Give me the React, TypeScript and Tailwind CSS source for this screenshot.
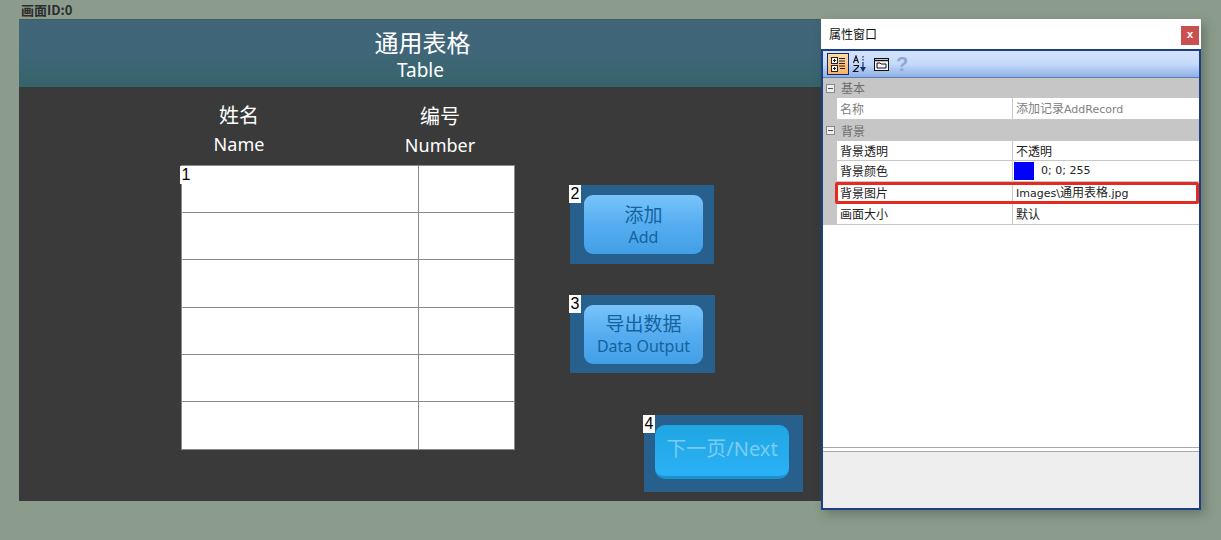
const sans = "font-['Noto_Sans','Noto_Sans_CJK_SC',sans-serif]";

function Tag({ n, className = "-left-px" }: { n: number; className?: string }) {
  return (
    <span className={`absolute top-0 flex h-[18px] w-[12px] items-center justify-center bg-white font-['Liberation_Sans',sans-serif] text-[16px] leading-none text-black ${className}`}>
      {n}
    </span>
  );
}

function BlueButton({ n, zh, en, className }: { n: number; zh: string; en: string; className: string }) {
  return (
    <div className={`relative flex items-center pl-[14px] bg-[#27608c] ${className}`}>
      <Tag n={n} />
      <div className="flex h-[59px] w-[119px] flex-col items-center justify-center rounded-[9px] bg-gradient-to-b from-[#78c4fa] via-[#55adf0] to-[#429fe6] text-[#14639f]">
        <span className="text-[19px] leading-[24px]">{zh}</span>
        <span className="text-[16px] leading-[20px]">{en}</span>
      </div>
    </div>
  );
}

function Section({ label, h = "h-[20px]" }: { label: string; h?: string }) {
  return (
    <div className={`flex ${h} items-center bg-[#c6c6c6] pl-[3px] text-[12px] text-[#6f6f6f]`}>
      <span className="mr-[6px] flex h-[9px] w-[9px] items-center justify-center border border-[#8a8a8a] bg-[#eeeeee]">
        <span className="h-px w-[5px] bg-[#555555]" />
      </span>
      {label}
    </div>
  );
}

function Row({ name, children, h, muted }: { name: string; children: React.ReactNode; h: string; muted?: boolean }) {
  return (
    <div className={`flex ${h} ${muted ? "text-[#808080]" : "text-[#222222]"} text-[12px]`}>
      <div className="w-[14px] bg-[#c6c6c6]" />
      <div className="flex w-[176px] items-center border-r border-b border-[#c8c8c8] bg-white pl-[3px]">{name}</div>
      <div className="flex flex-1 items-center border-b border-[#c8c8c8] bg-white pl-[3px]">{children}</div>
    </div>
  );
}

function Latin({ children }: { children: React.ReactNode }) {
  return <span className="font-['DejaVu_Sans',sans-serif] text-[11px]">{children}</span>;
}

function PropertyWindow() {
  return (
    <div className="absolute top-[19px] left-[821px] flex h-[491px] w-[380px] flex-col bg-white shadow-[4px_4px_10px_rgba(40,50,40,0.35)] font-['Noto_Sans_CJK_SC','Noto_Sans',sans-serif]">
      <div className="flex h-[32px] shrink-0 items-center justify-between border-b-2 border-[#1d3f86] pr-[2px] pl-[8px] text-[12px] text-[#111111]">
        属性窗口
        <span className="mt-[2px] flex h-[19px] w-[18px] items-center justify-center bg-[#c8504f] pb-[2px] font-['Liberation_Sans',sans-serif] text-[11px] font-bold text-white">
          x
        </span>
      </div>
      <div className="flex min-h-0 flex-1 flex-col border-x-2 border-b-2 border-[#1d3f86]">
        <div className="flex h-[27px] shrink-0 items-center gap-[5px] border-b border-[#5d7db5] bg-gradient-to-b from-[#d5e4fc] via-[#c5d9fa] to-[#8fb0e6] pl-[4px]">
          <span className="flex h-[22px] w-[22px] items-center justify-center border border-[#16266b] bg-gradient-to-b from-[#ffd9a8] to-[#f9b262]">
            <svg width="16" height="16" viewBox="0 0 16 16" fill="none" stroke="#222222" strokeWidth="1">
              <rect x="1.5" y="1.5" width="6" height="6" fill="#f4f4f4" />
              <rect x="1.5" y="9.5" width="6" height="6" fill="#f4f4f4" />
              <path d="M3 4.5h3M4.5 3v3M3 12.5h3M4.5 11v3M9 2.5h6M9 5h6M9 7.5h6M9 10h6M10 12.5h5" />
            </svg>
          </span>
          <svg width="15" height="18" viewBox="0 0 15 18" fill="none" className="-ml-[2px]">
            <path d="M1.5 8 4 1l2.5 7M2.5 5.5h3M1.5 10.5h5v1l-5 5h5" stroke="#111111" strokeWidth="1.1" />
            <path d="M11 1v1.5M11 4v1.5M11 7v5" stroke="#1a2f6b" strokeWidth="1.2" />
            <path d="m8 12 3 5 3-5z" fill="#1a2f6b" />
          </svg>
          <svg width="15" height="13" viewBox="0 0 15 13" fill="none" className="ml-[2px]">
            <rect x="0.5" y="0.5" width="14" height="12" fill="#f4f6fb" stroke="#111111" />
            <path d="M0.5 2.5h14" stroke="#111111" strokeWidth="1.4" />
            <path d="M3 10V5h3l1 1h5v4z" stroke="#111111" />
          </svg>
          <span className="ml-[2px] font-['Liberation_Sans',sans-serif] text-[20px] leading-none font-bold text-[#8fa8d2]">?</span>
        </div>
        <Section label="基本" />
        <Row name="名称" h="h-[22px]" muted>
          <span>添加记录<Latin>AddRecord</Latin></span>
        </Row>
        <Section label="背景" h="h-[21px]" />
        <Row name="背景透明" h="h-[20px]">
          不透明
        </Row>
        <Row name="背景颜色" h="h-[21px]">
          <span className="mr-[7px] -ml-[2px] h-[18px] w-[20px] bg-[#0000ff]" />
          <Latin>0; 0; 255</Latin>
        </Row>
        <div className="relative">
          <Row name="背景图片" h="h-[22px]">
            <span><Latin>Images\</Latin>通用表格<Latin>.jpg</Latin></span>
          </Row>
          <div className="absolute inset-y-0 right-0 left-[12px] rounded-[2px] border-[3px] border-[#e32b22]" />
        </div>
        <Row name="画面大小" h="h-[21px]">
          默认
        </Row>
        <div className="flex-1 border-b border-[#aaaaaa]" />
        <div className="h-[4px] shrink-0 border-b border-[#aaaaaa]" />
        <div className="h-[56px] shrink-0 bg-[#eeeeee]" />
      </div>
    </div>
  );
}

function DataTable() {
  const rows = [46, 47, 48, 47, 47, 48];
  return (
    <div className="relative w-[334px] border border-[#8a8a8a] bg-white">
      <Tag n={1} className="-left-[2px]" />
      {rows.map((h, i) => (
        <div key={i} className={`flex border-[#8a8a8a] ${i > 0 ? "border-t" : ""}`} style={{ height: h }}>
          <div className="w-[237px] border-r border-[#8a8a8a]" />
        </div>
      ))}
    </div>
  );
}

export default function App() {
  return (
    <div className={`relative h-[540px] w-[1221px] overflow-hidden bg-[#8b9c8c] ${sans}`}>
      <div className="flex h-[19px] items-center pl-[21px] font-['Noto_Sans_CJK_SC',sans-serif] text-[13px] font-bold text-[#2c2c2c]">
        画面ID:0
      </div>
      <div className="ml-[19px] flex h-[482px] w-[804px] flex-col border-t border-[#4a5a58]">
        <div className="flex h-[67px] shrink-0 flex-col items-center bg-gradient-to-b from-[#416579] via-[#3f6678] to-[#356469] pt-[7px] text-white">
          <span className="ml-[3px] text-[24px] leading-[32px]">通用表格</span>
          <span className="-ml-px text-[19px] leading-[22px]">Table</span>
        </div>
        <div className="flex flex-1 bg-[#3a3a3a]">
          <div className="ml-[162px] w-[334px]">
            <div className="flex h-[78px] pt-[15px] text-white">
              <div className="flex w-[116px] flex-col items-center">
                <span className="text-[20px] leading-[28px]">姓名</span>
                <span className="text-[18px] leading-[28px]">Name</span>
              </div>
              <div className="mt-px ml-[85px] flex w-[116px] flex-col items-center">
                <span className="text-[20px] leading-[28px]">编号</span>
                <span className="text-[18px] leading-[28px]">Number</span>
              </div>
            </div>
            <DataTable />
          </div>
          <div className="ml-[55px] flex flex-col pt-[98px]">
            <BlueButton n={2} zh="添加" en="Add" className="h-[79px] w-[144px]" />
            <BlueButton n={3} zh="导出数据" en="Data Output" className="mt-[31px] h-[78px] w-[145px]" />
            <div className="relative mt-[42px] ml-[74px] h-[77px] w-[159px] bg-[#27608c] pt-[10px] pl-[11px]">
              <Tag n={4} />
              <div className="flex h-[54px] w-[134px] items-center justify-center rounded-[10px] border-b-[3px] border-[#1a93cc] bg-gradient-to-b from-[#1fa6e2] to-[#2bb1f6] pb-[3px] text-[20px] text-[#7accf2]">
                下一页/Next
              </div>
            </div>
          </div>
        </div>
      </div>
      <PropertyWindow />
    </div>
  );
}
